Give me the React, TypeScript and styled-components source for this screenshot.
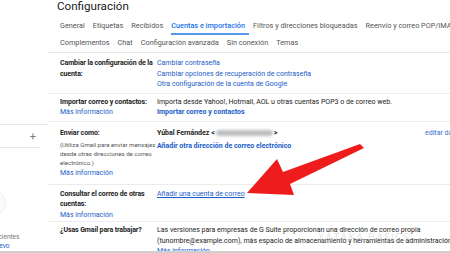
import React from "react";
import styled, { createGlobalStyle } from "styled-components";

const GlobalStyle = createGlobalStyle`
  html, body {
    margin: 0;
    padding: 0;
    background: #fff;
  }
  body {
    width: 450px;
    height: 253px;
    overflow: hidden;
    font-family: Roboto, "Liberation Sans", Arial, sans-serif;
    color: #222;
  }
`;

const Screen = styled.div`
  position: relative;
  width: 450px;
  height: 253px;
  overflow: hidden;
  display: flex;
  flex-direction: column;
`;

const Body = styled.div`
  flex: 1;
  display: flex;
  min-height: 0;
  overflow: hidden;
`;

const BottomEdge = styled.div`
  height: 2px;
  background: #cfcfcf;
  flex-shrink: 0;
`;

/* left nav, mostly cut off */
const Sidebar = styled.aside`
  width: 48px;
  flex-shrink: 0;
  display: flex;
  flex-direction: column;
  padding-top: 124px;
  box-sizing: border-box;
  & > * {
    flex-shrink: 0;
  }
`;

const SideLine = styled.div<{ $w: number }>`
  height: 1px;
  width: ${(p) => p.$w}px;
  background: #e6e6e6;
`;

const PlusRow = styled.div`
  height: 22px;
  display: flex;
  align-items: center;
  justify-content: flex-end;
  padding-right: 12px;
  font-size: 11px;
  color: #7a7a7a;
`;

const Avatar = styled.div`
  margin-top: 42px;
  margin-left: -20px;
  width: 24px;
  height: 24px;
  border-radius: 50%;
  border: 1px solid #eee;
  background: #fbfbfb;
`;

const SideText = styled.div<{ $blue?: boolean }>`
  font-size: 6.5px;
  line-height: 9px;
  white-space: nowrap;
  color: ${(p) => (p.$blue ? "#1a5dc9" : "#777")};
`;

const SideTexts = styled.div`
  margin-top: 17px;
  margin-left: -9px;
`;

const Main = styled.main`
  flex: 1;
  min-width: 0;
  display: flex;
  flex-direction: column;
  overflow: hidden;
  & > * {
    flex-shrink: 0;
  }
`;

const Title = styled.h1`
  margin: 0;
  height: 18px;
  padding-left: 9px;
  font-size: 11.6px;
  line-height: 13px;
  font-weight: 400;
  color: #202124;
  white-space: nowrap;
`;

const TabRow = styled.nav<{ $last?: boolean }>`
  height: 17px;
  display: flex;
  align-items: stretch;
  gap: 8px;
  padding-left: 12px;
  white-space: nowrap;
  border-bottom: ${(p) => (p.$last ? "1px solid #e6e6e6" : "none")};
`;

const Tab = styled.span<{ $active?: boolean }>`
  display: flex;
  align-items: center;
  font-size: 7.3px;
  color: ${(p) => (p.$active ? "#1a73e8" : "#555")};
  font-weight: ${(p) => (p.$active ? 500 : 400)};
  border-bottom: 2px solid ${(p) => (p.$active ? "#5b95ea" : "transparent")};
  padding-right: ${(p) => (p.$active ? "4px" : "0")};
  margin-right: ${(p) => (p.$active ? "-4px" : "0")};
`;

const Setting = styled.section<{ $pt: number; $pb: number }>`
  display: grid;
  grid-template-columns: 97px 265px 60px;
  padding: ${(p) => p.$pt}px 0 ${(p) => p.$pb}px 12px;
  border-bottom: 1px solid #ececec;
  font-size: 7px;
  line-height: 10.5px;
  white-space: nowrap;
`;

const Label = styled.div`
  font-weight: 700;
  color: #222;
  letter-spacing: -0.1px;
`;

const Note = styled.div`
  font-size: 6.1px;
  line-height: 8.8px;
  color: #555;
  margin: 3px 0 1px;
`;

const Value = styled.div`
  color: #222;
`;

const Line = styled.div<{ $mt?: number }>`
  margin-top: ${(p) => p.$mt ?? 0}px;
`;

const A = styled.span<{ $bold?: boolean; $under?: boolean }>`
  color: #1a5dc9;
  font-weight: ${(p) => (p.$bold ? 700 : 400)};
  text-decoration: ${(p) => (p.$under ? "underline" : "none")};
`;

const Strong = styled.span`
  font-weight: 700;
`;

const Blurred = styled.span`
  display: inline-block;
  width: 57px;
  height: 6px;
  margin: 0 1px;
  vertical-align: -1px;
  background: #bdbdbd;
  border-radius: 3px;
  filter: blur(1.4px);
`;

const Action = styled.div`
  padding-left: 3px;
  color: #3a6fcf;
`;

const Overlay = styled.svg`
  position: absolute;
  left: 0;
  top: 0;
  pointer-events: none;
`;

const Watermark = styled.div`
  position: absolute;
  left: 318px;
  top: 229px;
  font-family: "Open Sans", Roboto, sans-serif;
  font-size: 11px;
  letter-spacing: 1px;
  color: rgba(200, 200, 200, 0.5);
  white-space: nowrap;
  pointer-events: none;
`;

const tabsTop = ["General", "Etiquetas", "Recibidos", "Cuentas e importación", "Filtros y direcciones bloqueadas", "Reenvío y correo POP/IMAP"];
const tabsBottom = ["Complementos", "Chat", "Configuración avanzada", "Sin conexión", "Temas"];

export default function App() {
  return (
    <Screen>
      <GlobalStyle />
      <Body>
        <Sidebar>
          <SideLine $w={48} />
          <PlusRow>+</PlusRow>
          <SideLine $w={40} />
          <Avatar />
          <SideTexts>
            <SideText>Recientes</SideText>
            <SideText $blue>Nuevo</SideText>
          </SideTexts>
        </Sidebar>

        <Main>
          <Title>Configuración</Title>
          <TabRow>
            {tabsTop.map((t) => (
              <Tab key={t} $active={t === "Cuentas e importación"}>
                {t}
              </Tab>
            ))}
          </TabRow>
          <TabRow $last>
            {tabsBottom.map((t) => (
              <Tab key={t}>{t}</Tab>
            ))}
          </TabRow>

          <Setting $pt={5} $pb={3}>
            <Label>
              Cambiar la configuración de la
              <br />
              cuenta:
            </Label>
            <Value>
              <Line><A>Cambiar contraseña</A></Line>
              <Line><A>Cambiar opciones de recuperación de contraseña</A></Line>
              <Line><A>Otra configuración de la cuenta de Google</A></Line>
            </Value>
          </Setting>

          <Setting $pt={3} $pb={3}>
            <div>
              <Label>Importar correo y contactos:</Label>
              <A>Más información</A>
            </div>
            <Value>
              <Line>Importa desde Yahoo!, Hotmail, AOL u otras cuentas POP3 o de correo web.</Line>
              <Line><A $bold>Importar correo y contactos</A></Line>
            </Value>
          </Setting>

          <Setting $pt={6} $pb={5}>
            <div>
              <Label>Enviar como:</Label>
              <Note>
                (Utiliza Gmail para enviar mensajes
                <br />
                desde otras direcciones de correo
                <br />
                electrónico.)
              </Note>
              <A>Más información</A>
            </div>
            <Value>
              <Line>
                <Strong>Yúbal Fernández &lt;</Strong>
                <Blurred />
                <Strong>&gt;</Strong>
              </Line>
              <Line $mt={3}><A $bold>Añadir otra dirección de correo electrónico</A></Line>
            </Value>
            <Action>editar datos</Action>
          </Setting>

          <Setting $pt={4} $pb={1}>
            <div>
              <Label>
                Consultar el correo de otras
                <br />
                cuentas:
              </Label>
              <A>Más información</A>
            </div>
            <Value>
              <A $under>Añadir una cuenta de correo</A>
            </Value>
          </Setting>

          <Setting $pt={3} $pb={0}>
            <Label>¿Usas Gmail para trabajar?</Label>
            <Value>
              <Line>Las versiones para empresas de G Suite proporcionan una dirección de correo propia</Line>
              <Line>(tunombre@example.com), más espacio de almacenamiento y herramientas de administración.</Line>
              <Line><A>Más información</A></Line>
            </Value>
          </Setting>
        </Main>
      </Body>
      <BottomEdge />

      <Watermark>XATAKA BASICS</Watermark>
      <Overlay width={450} height={253} viewBox="0 0 450 253">
        <polygon
          points="247,193 277,159 283,172 360,144 364,148 290,184 294,195"
          fill="#ee1c1c"
        />
      </Overlay>
    </Screen>
  );
}
